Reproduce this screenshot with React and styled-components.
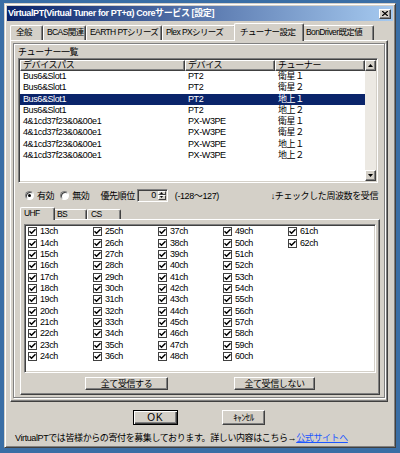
import React from "react";
import styled, { createGlobalStyle } from "styled-components";

const GlobalStyle = createGlobalStyle`
  html, body {
    margin: 0;
    padding: 0;
    background: #3a6ea5;
  }
  body {
    width: 400px;
    height: 453px;
    overflow: hidden;
    font-family: "Liberation Sans", "Noto Sans CJK JP", sans-serif;
    font-size: 9px;
    letter-spacing: -0.4px;
    color: #000;
  }
`;

const FACE = "#d4d0c8";

const Window = styled.div`
  box-sizing: border-box;
  width: 392px;
  height: 445px;
  margin: 3px 0 0 4px;
  padding: 2px;
  background: ${FACE};
  border: 1px solid;
  border-color: ${FACE} #404040 #404040 ${FACE};
  box-shadow: inset 1px 1px #fff, inset -1px -1px #808080;
  display: flex;
  flex-direction: column;
`;

const TitleBar = styled.div`
  height: 15px;
  display: flex;
  align-items: center;
  background: linear-gradient(to right, #0a246a, #a6caf0);
  padding: 0 2px 0 1px;
`;

const TitleText = styled.span`
  flex: 1;
  color: #fff;
  font-weight: bold;
  font-size: 9px;
  letter-spacing: -0.4px;
  line-height: 15px;
  white-space: nowrap;
`;

const CloseButton = styled.div`
  box-sizing: border-box;
  width: 12px;
  height: 10px;
  background: ${FACE};
  border: 1px solid;
  border-color: #fff #404040 #404040 #fff;
  box-shadow: inset -1px -1px #808080;
  display: flex;
  align-items: center;
  justify-content: center;
`;

const Body = styled.div`
  padding: 0 5px 0 3px;
  display: flex;
  flex-direction: column;
`;

const TabStrip = styled.div`
  display: flex;
  align-items: flex-end;
  height: ${(p) => p.$h}px;
  margin-top: ${(p) => p.$mt || 0}px;
  margin-left: ${(p) => p.$ml || 0}px;
`;

const Tab = styled.div`
  box-sizing: border-box;
  width: ${(p) => p.$w}px;
  height: ${(p) => (p.$active ? p.$h + 1 : p.$h - 2)}px;
  padding-left: ${(p) => p.$pl ?? 3}px;
  background: ${FACE};
  border: 1px solid;
  border-color: #fff #404040 transparent #fff;
  border-bottom: none;
  box-shadow: inset -1px 0 #808080;
  border-radius: 2px 2px 0 0;
  font-size: 8.5px;
  letter-spacing: -0.6px;
  line-height: ${(p) => (p.$active ? p.$h - 1 : p.$h - 4)}px;
  white-space: nowrap;
  position: relative;
  z-index: ${(p) => (p.$active ? 2 : 1)};
  margin: ${(p) => (p.$active ? `0 -2px -1px ${p.$first ? 0 : -2}px` : "0")};
`;

const TabPanel = styled.div`
  box-sizing: border-box;
  height: 362px;
  padding: 2px 2px 0 2px;
  background: ${FACE};
  border: 1px solid;
  border-color: #fff #404040 #404040 #fff;
  box-shadow: inset -1px -1px #808080;
`;

const Frame = styled.div`
  box-sizing: border-box;
  height: 355px;
  padding: 3px 4px 0 4px;
  border: 1px solid #808080;
  box-shadow: inset 1px 1px #fff, 1px 1px #fff;
  display: flex;
  flex-direction: column;
`;

const FrameLabel = styled.div`
  height: 11px;
  line-height: 11px;
`;

const sunken = `
  border: 1px solid;
  border-color: #808080 #fff #fff #808080;
  box-shadow: inset 1px 1px #404040, inset -1px -1px ${FACE};
  background: #fff;
`;

const ListView = styled.div`
  box-sizing: border-box;
  width: 360px;
  height: 125px;
  padding: 1px;
  ${sunken}
  display: flex;
`;

const ListTable = styled.div`
  flex: 1;
  display: flex;
  flex-direction: column;
`;

const ListRow = styled.div`
  display: grid;
  grid-template-columns: 165px 90px 90px;
  height: ${(p) => (p.$header ? 11 : 11.3)}px;
  line-height: ${(p) => (p.$header ? 11 : 11)}px;
  background: ${(p) => (p.$selected ? "#0a246a" : "transparent")};
  color: ${(p) => (p.$selected ? "#fff" : "#000")};
`;

const HeaderCell = styled.div`
  box-sizing: border-box;
  padding-left: 2px;
  background: ${FACE};
  border: 1px solid;
  border-color: #fff #404040 #404040 #fff;
  box-shadow: inset -1px -1px #808080;
  line-height: 9px;
  white-space: nowrap;
`;

const Cell = styled.div`
  padding-left: 3px;
  white-space: nowrap;
`;

const ScrollBar = styled.div`
  width: 11px;
  display: flex;
  flex-direction: column;
  background: #ece9e3;
`;

const ScrollButton = styled.div`
  box-sizing: border-box;
  width: 11px;
  height: 11px;
  background: ${FACE};
  border: 1px solid;
  border-color: #fff #404040 #404040 #fff;
  box-shadow: inset -1px -1px #808080;
  display: flex;
  align-items: center;
  justify-content: center;
`;

const ScrollTrack = styled.div`
  flex: 1;
`;

const OptionsRow = styled.div`
  height: 24px;
  display: flex;
  align-items: center;
  padding: 0 0 0 7px;
`;

const Radio = styled.span`
  box-sizing: border-box;
  width: 9px;
  height: 9px;
  border-radius: 50%;
  background: #fff;
  border: 1px solid;
  border-color: #808080 #fff #fff #808080;
  box-shadow: inset 1px 1px #404040;
  margin-left: ${(p) => p.$ml || 0}px;
  display: flex;
  align-items: center;
  justify-content: center;
  &::after {
    content: "";
    width: 3px;
    height: 3px;
    border-radius: 50%;
    background: ${(p) => (p.$checked ? "#000" : "transparent")};
  }
`;

const Text = styled.span`
  margin-left: ${(p) => p.$ml || 0}px;
  white-space: nowrap;
`;

const RightText = styled.span`
  margin-left: auto;
  margin-right: 2px;
  white-space: nowrap;
`;

const SpinBox = styled.div`
  box-sizing: border-box;
  width: 31px;
  height: 13px;
  margin-left: 2px;
  ${sunken}
  display: flex;
  padding: 1px;
`;

const SpinValue = styled.div`
  flex: 1;
  text-align: right;
  padding-right: 2px;
  line-height: 9px;
  background: ${FACE};
`;

const SpinButtons = styled.div`
  width: 8px;
  display: flex;
  flex-direction: column;
`;

const SpinButton = styled.div`
  box-sizing: border-box;
  flex: 1;
  background: ${FACE};
  border: 1px solid;
  border-color: #fff #404040 #404040 #fff;
  display: flex;
  align-items: center;
  justify-content: center;
`;

const SubPanel = styled.div`
  box-sizing: border-box;
  width: 360px;
  height: 176px;
  margin-left: 2px;
  padding: 4px 3px 0 3px;
  border: 1px solid;
  border-color: #fff #404040 #404040 #fff;
  box-shadow: inset -1px -1px #808080;
  display: flex;
  flex-direction: column;
`;

const ChannelBox = styled.div`
  box-sizing: border-box;
  height: 149px;
  padding: 1px;
  ${sunken}
`;

const ChannelGrid = styled.div`
  display: grid;
  grid-auto-flow: column;
  grid-template-rows: repeat(12, 11.35px);
  grid-template-columns: repeat(5, 65px);
  padding-left: 2px;
`;

const Channel = styled.div`
  display: flex;
  align-items: center;
  gap: 3px;
  line-height: 11px;
`;

const Check = styled.span`
  box-sizing: border-box;
  width: 9px;
  height: 9px;
  background: #fff;
  border: 1px solid #404040;
  display: flex;
  align-items: center;
  justify-content: center;
`;

const ButtonRow = styled.div`
  display: flex;
  justify-content: center;
  gap: ${(p) => p.$gap}px;
  margin-top: ${(p) => p.$mt}px;
`;

const Button = styled.div`
  box-sizing: border-box;
  width: ${(p) => p.$w}px;
  height: ${(p) => p.$h}px;
  background: ${FACE};
  border: 1px solid;
  border-color: ${(p) => (p.$default ? "#000" : "#fff #404040 #404040 #fff")};
  box-shadow: ${(p) =>
    p.$default
      ? "inset 1px 1px #fff, inset -1px -1px #404040, inset -2px -2px #808080"
      : "inset -1px -1px #808080"};
  display: flex;
  align-items: center;
  justify-content: center;
  white-space: nowrap;
  font-size: ${(p) => p.$fs || 9}px;
  letter-spacing: ${(p) => (p.$default ? "1px" : "-0.4px")};
`;

const Footer = styled.div`
  margin-top: 7px;
  padding-left: 5px;
  line-height: 12px;
  white-space: nowrap;
  letter-spacing: -0.4px;
`;

const Link = styled.span`
  color: #1a56ff;
  text-decoration: underline;
`;

const CheckMark = () => (
  <svg width="7" height="7" viewBox="0 0 7 7">
    <path d="M0.5 3.2 L2.5 5.2 L6.5 1.2" stroke="#000" strokeWidth="1.5" fill="none" />
  </svg>
);

const Arrow = ({ down }) => (
  <svg width="5" height="3" viewBox="0 0 5 3">
    <path d={down ? "M0 0 H5 L2.5 3 Z" : "M0 3 H5 L2.5 0 Z"} fill="#000" />
  </svg>
);

const tabs = [
  { label: "全般", w: 33, pl: 5 },
  { label: "BCAS関連", w: 43 },
  { label: "EARTH PTシリーズ", w: 76 },
  { label: "Plex PXシリーズ", w: 74 },
  { label: "チューナー設定", w: 70, active: true, pl: 5 },
  { label: "BonDriver既定値", w: 72 },
];

const subTabs = [
  { label: "UHF", w: 35, active: true },
  { label: "BS", w: 34 },
  { label: "CS", w: 34 },
];

const PX = "4&1cd37f23&0&00e1";
const rows = [
  ["Bus6&Slot1", "PT2", "衛星１"],
  ["Bus6&Slot1", "PT2", "衛星２"],
  ["Bus6&Slot1", "PT2", "地上１"],
  ["Bus6&Slot1", "PT2", "地上２"],
  [PX, "PX-W3PE", "衛星１"],
  [PX, "PX-W3PE", "衛星２"],
  [PX, "PX-W3PE", "地上１"],
  [PX, "PX-W3PE", "地上２"],
];

const channels = Array.from({ length: 50 }, (_, i) => i + 13);

export default function App() {
  return (
    <>
      <GlobalStyle />
      <Window>
        <TitleBar>
          <TitleText>VirtualPT(Virtual Tuner for PT+α) Coreサービス [設定]</TitleText>
          <CloseButton>
            <svg width="6" height="5" viewBox="0 0 6 5">
              <path d="M0 0 L6 5 M6 0 L0 5" stroke="#000" strokeWidth="1.3" />
            </svg>
          </CloseButton>
        </TitleBar>
        <Body>
          <TabStrip $h={17} $mt={2}>
            {tabs.map((t) => (
              <Tab key={t.label} $w={t.w} $h={17} $pl={t.pl} $active={t.active}>
                {t.label}
              </Tab>
            ))}
          </TabStrip>
          <TabPanel>
            <Frame>
              <FrameLabel>チューナー一覧</FrameLabel>
              <ListView>
                <ListTable>
                  <ListRow $header>
                    <HeaderCell>デバイスパス</HeaderCell>
                    <HeaderCell>デバイス</HeaderCell>
                    <HeaderCell>チューナー</HeaderCell>
                  </ListRow>
                  {rows.map((r, i) => (
                    <ListRow key={i} $selected={i === 2}>
                      <Cell>{r[0]}</Cell>
                      <Cell>{r[1]}</Cell>
                      <Cell>{r[2]}</Cell>
                    </ListRow>
                  ))}
                </ListTable>
                <ScrollBar>
                  <ScrollButton>
                    <Arrow />
                  </ScrollButton>
                  <ScrollTrack />
                  <ScrollButton>
                    <Arrow down />
                  </ScrollButton>
                </ScrollBar>
              </ListView>
              <OptionsRow>
                <Radio $checked />
                <Text $ml={3}>有効</Text>
                <Radio $ml={6} />
                <Text $ml={3}>無効</Text>
                <Text $ml={11}>優先順位</Text>
                <SpinBox>
                  <SpinValue>0</SpinValue>
                  <SpinButtons>
                    <SpinButton>
                      <svg width="3" height="2" viewBox="0 0 3 2">
                        <path d="M0 2 H3 L1.5 0 Z" fill="#000" />
                      </svg>
                    </SpinButton>
                    <SpinButton>
                      <svg width="3" height="2" viewBox="0 0 3 2">
                        <path d="M0 0 H3 L1.5 2 Z" fill="#000" />
                      </svg>
                    </SpinButton>
                  </SpinButtons>
                </SpinBox>
                <Text $ml={7}>(-128～127)</Text>
                <RightText>↓チェックした周波数を受信</RightText>
              </OptionsRow>
              <TabStrip $h={12} $ml={2}>
                {subTabs.map((t) => (
                  <Tab key={t.label} $w={t.w} $h={12} $active={t.active} $first={t.active}>
                    {t.label}
                  </Tab>
                ))}
              </TabStrip>
              <SubPanel>
                <ChannelBox>
                  <ChannelGrid>
                    {channels.map((c) => (
                      <Channel key={c}>
                        <Check>
                          <CheckMark />
                        </Check>
                        {c}ch
                      </Channel>
                    ))}
                  </ChannelGrid>
                </ChannelBox>
                <ButtonRow $gap={66} $mt={4}>
                  <Button $w={83} $h={13}>全て受信する</Button>
                  <Button $w={81} $h={13}>全て受信しない</Button>
                </ButtonRow>
              </SubPanel>
            </Frame>
          </TabPanel>
          <ButtonRow $gap={44} $mt={8}>
            <Button $w={45} $h={15} $default $fs={10}>OK</Button>
            <Button $w={43} $h={15}>ｷｬﾝｾﾙ</Button>
          </ButtonRow>
          <Footer>
            VirtualPTでは皆様からの寄付を募集しております。詳しい内容はこちら→
            <Link>公式サイトへ</Link>
          </Footer>
        </Body>
      </Window>
    </>
  );
}
